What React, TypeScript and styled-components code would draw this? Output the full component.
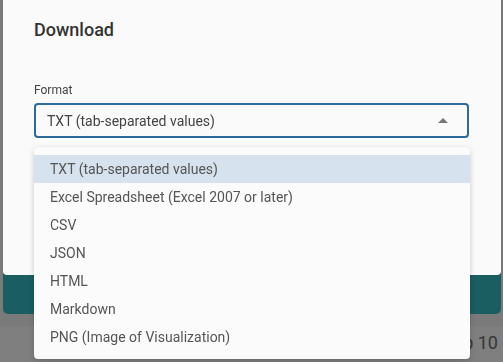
import React from "react";
import styled, { createGlobalStyle } from "styled-components";

const Global = createGlobalStyle`
  html, body { margin: 0; padding: 0; }
  body {
    width: 503px;
    height: 362px;
    overflow: hidden;
    background: #f4f4f4;
    font-family: Roboto, "Noto Sans", "Liberation Sans", sans-serif;
  }
`;

const Page = styled.div`
  display: flex;
  flex-direction: column;
  height: 362px;
  padding: 0 2px 0 3px;
`;

const TealCard = styled.div`
  height: 314px;
  background: #37bcc4;
  border-radius: 0 0 5px 5px;
`;

const FooterRow = styled.div`
  margin-top: 12px;
  margin-left: -3px;
  margin-right: -2px;
  flex: 1;
  background: #ffffff;
  display: flex;
  justify-content: flex-end;
  align-items: center;
  padding: 0 5px 4px 0;
  font-size: 18px;
  color: #6e6e6e;
`;

const Backdrop = styled.div`
  position: fixed;
  inset: 0;
  background: rgba(0, 0, 0, 0.5);
`;

const Dialog = styled.div`
  position: absolute;
  left: 3px;
  top: -10px;
  width: 498px;
  height: 285px;
  box-sizing: border-box;
  background: #fafafa;
  border-radius: 4px;
  padding: 28px 32px 0 31px;
  display: flex;
  flex-direction: column;
`;

const Title = styled.h2`
  margin: 0;
  font-size: 18px;
  line-height: 24px;
  font-weight: 500;
  color: #333333;
`;

const Field = styled.div`
  margin-top: 40px;
  display: flex;
  flex-direction: column;
  gap: 5px;
  position: relative;
`;

const Label = styled.label`
  font-size: 12px;
  line-height: 16px;
  color: #444444;
`;

const SelectBox = styled.div`
  height: 35px;
  box-sizing: border-box;
  border: 2px solid #2c6a9c;
  border-radius: 4px;
  display: flex;
  align-items: center;
  justify-content: space-between;
  padding: 0 19px 0 11px;
  font-size: 14px;
  color: #444444;
`;

const Arrow = styled.span`
  width: 0;
  height: 0;
  border-left: 5px solid transparent;
  border-right: 5px solid transparent;
  border-bottom: 5px solid #777777;
  margin-top: -1px;
`;

const Menu = styled.ul`
  position: absolute;
  top: 65px;
  left: 0;
  width: 436px;
  margin: 0;
  padding: 8px 0;
  list-style: none;
  background: #fbfbfb;
  border-radius: 4px;
  box-shadow: 0 2px 6px rgba(0, 0, 0, 0.18), 0 0 1px rgba(0, 0, 0, 0.12);
`;

const Item = styled.li<{ $active?: boolean }>`
  height: 28px;
  display: flex;
  align-items: center;
  padding-left: 16px;
  font-size: 14px;
  color: #555555;
  background: ${(p) => (p.$active ? "#d6e2ee" : "transparent")};
`;

const options = [
  "TXT (tab-separated values)",
  "Excel Spreadsheet (Excel 2007 or later)",
  "CSV",
  "JSON",
  "HTML",
  "Markdown",
  "PNG (Image of Visualization)",
];

export default function App() {
  return (
    <>
      <Global />
      <Page>
        <TealCard />
        <FooterRow>Top 10</FooterRow>
      </Page>
      <Backdrop>
        <Dialog role="dialog">
          <Title>Download</Title>
          <Field>
            <Label>Format</Label>
            <SelectBox>
              <span>TXT (tab-separated values)</span>
              <Arrow />
            </SelectBox>
            <Menu>
              {options.map((o, i) => (
                <Item key={o} $active={i === 0}>
                  {o}
                </Item>
              ))}
            </Menu>
          </Field>
        </Dialog>
      </Backdrop>
    </>
  );
}
